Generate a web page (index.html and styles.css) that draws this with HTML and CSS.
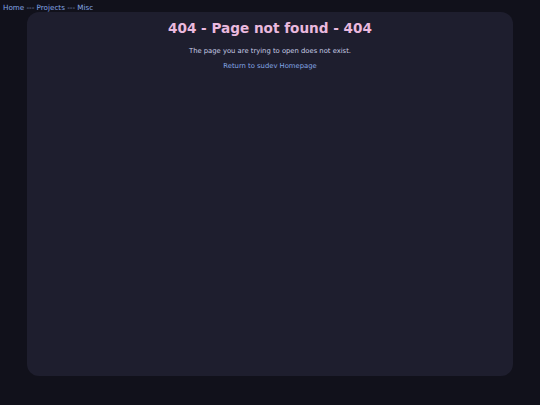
FILE: index.html
```html
<!DOCTYPE html>
<html>
<head>
<meta charset="utf-8">
<link rel="stylesheet" href="styles.css">
</head>
<body>
<nav class="nav"><a href="#">Home</a> --- <a href="#">Projects</a> --- <a href="#">Misc</a></nav>
<main class="card">
<h1 class="title">404 - Page not found - 404</h1>
<p class="msg">The page you are trying to open does not exist.</p>
<a class="home" href="#">Return to sudev Homepage</a>
</main>
</body>
</html>
```
FILE: styles.css
```css
html, body { margin: 0; padding: 0; }
body {
  background: #11111b;
  font-family: "DejaVu Sans", sans-serif;
  color: #cdd6f4;
  width: 540px;
  height: 405px;
  overflow: hidden;
}
.nav {
  font-size: 7.2px;
  line-height: 9px;
  padding: 3px 3px 0;
  color: #8a9ac0;
  height: 9px;
}
.nav a { color: #84a6e6; text-decoration: none; }
.card {
  margin: 0 27px;
  height: 364px;
  background: #1e1e2e;
  border-radius: 12px;
  display: flex;
  flex-direction: column;
  align-items: center;
  padding-top: 8px;
  box-sizing: border-box;
}
.title {
  margin: 0;
  font-size: 13.6px;
  line-height: 16px;
  color: #eab9de;
  font-weight: bold;
}
.msg {
  margin: 11px 0 0;
  font-size: 6.8px;
  line-height: 9px;
  color: #c8cde6;
}
.home {
  margin-top: 6px;
  font-size: 6.8px;
  line-height: 9px;
  color: #84a6e6;
  text-decoration: none;
}
```
